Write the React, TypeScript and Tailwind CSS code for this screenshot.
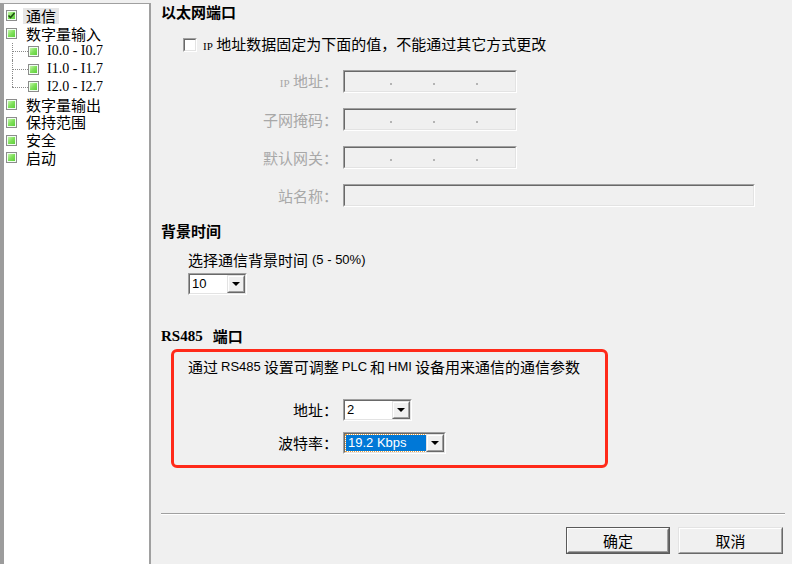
import React from "react";

const latin = "font-['Liberation_Sans',Arial,sans-serif]";
const serif = "font-['Liberation_Serif','Times_New_Roman',serif]";

function TreeBox({ checked }: { checked?: boolean }) {
  return (
    <span className="relative flex-none inline-block w-[11px] h-[11px] border border-[#8c8c8c] bg-[linear-gradient(135deg,#d8f9c0_0%,#7fe05a_50%,#55c832_100%)] shadow-[inset_0_0_0_1px_#f0fff0]">
      {checked && (
        <svg className="absolute left-0 top-0" width="9" height="9" viewBox="0 0 9 9">
          <path d="M1.5 4.5 L3.5 6.5 L7.5 2" stroke="#1f4f12" strokeWidth="1.6" fill="none" />
        </svg>
      )}
    </span>
  );
}

type Item = { label: string; level: number; checked?: boolean; selected?: boolean; last?: boolean };

const items: Item[] = [
  { label: "通信", level: 0, checked: true, selected: true },
  { label: "数字量输入", level: 0 },
  { label: "I0.0 - I0.7", level: 1 },
  { label: "I1.0 - I1.7", level: 1 },
  { label: "I2.0 - I2.7", level: 1, last: true },
  { label: "数字量输出", level: 0 },
  { label: "保持范围", level: 0 },
  { label: "安全", level: 0 },
  { label: "启动", level: 0 },
];

function TreeRow({ item }: { item: Item }) {
  if (item.level === 1) {
    return (
      <div className="relative h-[17.75px] flex items-center">
        <span
          className={
            item.last
              ? "absolute left-[8px] top-0 h-1/2 border-l border-dotted border-[#8a8a8a]"
              : "absolute left-[8px] top-0 h-full border-l border-dotted border-[#8a8a8a]"
          }
        />
        <span className="absolute left-[8px] top-1/2 w-[16px] border-t border-dotted border-[#8a8a8a]" />
        <span className="ml-[24px] flex items-center">
          <TreeBox />
        </span>
        <span className={`ml-[5px] px-[3px] h-[16px] leading-[16px] text-[14px] ${serif}`}>{item.label}</span>
      </div>
    );
  }
  return (
    <div className="relative h-[17.75px] flex items-center">
      <span className="ml-[2px] flex items-center">
        <TreeBox checked={item.checked} />
      </span>
      <span
        className={
          item.selected
            ? "ml-[6px] px-[3px] h-[16px] leading-[16px] bg-[#e6e6e6]"
            : "ml-[6px] px-[3px] h-[16px] leading-[16px]"
        }
      >
        {item.label}
      </span>
    </div>
  );
}

function Sunken({ className, children }: { className: string; children?: React.ReactNode }) {
  return (
    <div className={`border border-t-[#a0a0a0] border-l-[#a0a0a0] border-b-white border-r-white ${className}`}>
      <div className="h-full w-full border border-t-[#696969] border-l-[#696969] border-b-[#e3e3e3] border-r-[#e3e3e3]">
        {children}
      </div>
    </div>
  );
}

function IpInput() {
  return (
    <Sunken className="w-[174px] h-[23px] bg-[#f0f0f0]">
      <div className="h-full flex items-center pl-[45px] gap-[41px] pt-[4px]">
        <span className="w-[2px] h-[2px] bg-[#b4b4b4]" />
        <span className="w-[2px] h-[2px] bg-[#b4b4b4]" />
        <span className="w-[2px] h-[2px] bg-[#b4b4b4]" />
      </div>
    </Sunken>
  );
}

function DropButton() {
  return (
    <div className="flex-none w-[18px] h-full border border-t-[#e3e3e3] border-l-[#e3e3e3] border-b-[#696969] border-r-[#696969] bg-[#f0f0f0]">
      <div className="h-full w-full border border-t-white border-l-white border-b-[#a0a0a0] border-r-[#a0a0a0] flex items-center justify-center">
        <span className="w-0 h-0 border-l-[4px] border-r-[4px] border-t-[4px] border-l-transparent border-r-transparent border-t-black" />
      </div>
    </div>
  );
}

function Select({ className, value, focused }: { className: string; value: string; focused?: boolean }) {
  return (
    <Sunken className={`h-[22px] bg-white ${className}`}>
      <div className="h-full flex">
        <div className="flex-1 min-w-0 h-full flex items-center">
          {focused ? (
            <span className={`ml-[1px] h-[16px] flex-1 flex items-center bg-[#0078d7] text-white outline outline-1 outline-dotted outline-[#e8a040] pl-[2px] text-[13px] ${latin}`}>
              {value}
            </span>
          ) : (
            <span className={`pl-[2px] text-[13px] ${latin}`}>{value}</span>
          )}
        </div>
        <DropButton />
      </div>
    </Sunken>
  );
}

function Label({ className, children }: { className: string; children: React.ReactNode }) {
  return <div className={`flex-none text-right leading-[20px] ${className}`}>{children}</div>;
}

function Button({ children, isDefault }: { children: React.ReactNode; isDefault?: boolean }) {
  if (isDefault) {
    return (
      <div className="w-[104px] h-[27px] border border-[#5a5a5a] bg-[#f0f0f0]">
        <div className="h-full w-full border border-t-white border-l-white border-b-[#696969] border-r-[#696969]">
          <div className="h-full w-full border border-t-[#f0f0f0] border-l-[#f0f0f0] border-b-[#a0a0a0] border-r-[#a0a0a0] flex items-center justify-center leading-[20px]">
            {children}
          </div>
        </div>
      </div>
    );
  }
  return (
    <div className="w-[105px] h-[27px] border border-t-[#e3e3e3] border-l-[#e3e3e3] border-b-[#696969] border-r-[#696969] bg-[#f0f0f0]">
      <div className="h-full w-full border border-t-white border-l-white border-b-[#a0a0a0] border-r-[#a0a0a0] flex items-center justify-center leading-[20px]">
        {children}
      </div>
    </div>
  );
}

export default function App() {
  const ipRows = ["IP 地址：", "子网掩码：", "默认网关："];
  return (
    <div className="w-[792px] h-[564px] flex bg-[#f0f0f0] overflow-hidden text-black text-[15px] font-['Noto_Sans_CJK_SC',sans-serif]">
      {/* Left tree pane */}
      <div className="flex-none w-[151px] mt-[3px] h-[561px] bg-white border-l-4 border-l-[#9c9c9c] border-t border-t-[#a0a0a0] border-r-2 border-r-[#a0a0a0] pt-[3px]">
        {items.map((it) => (
          <TreeRow key={it.label} item={it} />
        ))}
      </div>

      {/* Right settings pane */}
      <div className="flex-1 flex flex-col pl-[10px] pr-[7px]">
        <div className="h-[24px] flex items-center font-bold">以太网端口</div>

        <div className="mt-[11px] h-[20px] flex items-center pl-[22px]">
          <span className="flex-none w-[14px] h-[14px] border border-t-[#a0a0a0] border-l-[#a0a0a0] border-b-white border-r-white">
            <span className="block h-full w-full bg-white border border-t-[#696969] border-l-[#696969] border-b-[#e3e3e3] border-r-[#e3e3e3]" />
          </span>
          <span className="ml-[6px] leading-[20px] whitespace-nowrap">
            <span className={`text-[11px] ${serif}`}>IP</span> 地址数据固定为下面的值，不能通过其它方式更改
          </span>
        </div>

        {ipRows.map((l) => (
          <div key={l} className="mt-[15px] flex items-center">
            <Label className="w-[177px] text-[#a8a8a8]">
              {l.startsWith("IP") ? (
                <>
                  <span className={`text-[11px] ${serif}`}>IP</span> 地址：
                </>
              ) : (
                l
              )}
            </Label>
            <div className="ml-[5px]">
              <IpInput />
            </div>
          </div>
        ))}

        <div className="mt-[15px] flex items-center">
          <Label className="w-[177px] text-[#a8a8a8]">站名称：</Label>
          <div className="ml-[5px]">
            <Sunken className="w-[412px] h-[23px] bg-[#f0f0f0]" />
          </div>
        </div>

        <div className="mt-[14px] h-[20px] flex items-center font-bold">背景时间</div>
        <div className="mt-[9px] h-[20px] flex items-center pl-[27px] whitespace-nowrap">
          选择通信背景时间<span className={`ml-[4px] text-[13px] ${latin}`}>(5 - 50%)</span>
        </div>
        <div className="mt-[3px] pl-[27px] flex">
          <Select className="w-[59px]" value="10" />
        </div>

        <div className="mt-[31px] h-[20px] flex items-center font-bold">
          <span className={`text-[15px] ${serif}`}>RS485</span>
          <span className="ml-[10px]">端口</span>
        </div>

        <div className="mt-[3px] ml-[10px] w-[437px] h-[119px] border-[3px] border-[#ff2a1a] rounded-[6px] pl-[14px] pt-[5px]">
          <div className="h-[20px] flex items-center whitespace-nowrap">
            通过<span className={`mx-[3px] text-[13px] ${latin}`}>RS485</span>设置可调整
            <span className={`mx-[3px] text-[13px] ${latin}`}>PLC</span>和
            <span className={`mx-[3px] text-[13px] ${latin}`}>HMI</span>设备用来通信的通信参数
          </div>
          <div className="mt-[22px] flex items-center -ml-[14px]">
            <Label className="w-[164px]">地址：</Label>
            <div className="ml-[5px]">
              <Select className="w-[69px]" value="2" />
            </div>
          </div>
          <div className="mt-[11px] flex items-center -ml-[14px]">
            <Label className="w-[164px]">波特率：</Label>
            <div className="ml-[5px]">
              <Select className="w-[103px]" value="19.2 Kbps" focused />
            </div>
          </div>
        </div>

        <div className="mt-[45px] h-[2px] border-t border-t-[#a0a0a0] border-b border-b-white" />

        <div className="mt-[12px] flex justify-end gap-[8px] pr-[2px]">
          <Button isDefault>确定</Button>
          <Button>取消</Button>
        </div>
      </div>
    </div>
  );
}
